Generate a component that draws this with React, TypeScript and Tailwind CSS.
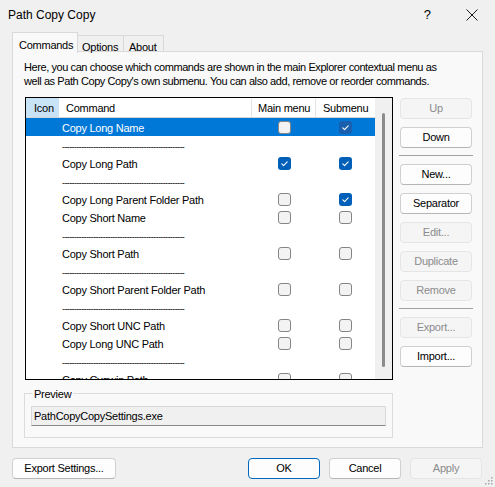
import clsx from 'clsx'

type Row = { label?: string; main?: boolean; sub?: boolean; selected?: boolean; sep?: boolean }

const ROWS: Row[] = [
  { label: 'Copy Long Name', main: false, sub: true, selected: true },
  { sep: true },
  { label: 'Copy Long Path', main: true, sub: true },
  { sep: true },
  { label: 'Copy Long Parent Folder Path', main: false, sub: true },
  { label: 'Copy Short Name' },
  { sep: true },
  { label: 'Copy Short Path' },
  { sep: true },
  { label: 'Copy Short Parent Folder Path' },
  { sep: true },
  { label: 'Copy Short UNC Path' },
  { label: 'Copy Long UNC Path' },
  { sep: true },
  { label: 'Copy Cygwin Path' },
]

function Check({ checked, selected }: { checked?: boolean; selected?: boolean }) {
  if (checked) {
    return (
      <span
        className={clsx(
          'w-[13px] h-[13px] rounded-[3px] flex items-center justify-center',
          selected ? 'bg-[#1a5fae]' : 'bg-[#005fb8]'
        )}
      >
        <svg width="13" height="13" viewBox="0 0 13 13">
          <path d="M3.8 6.9 L5.6 8.6 L9.2 4.9" fill="none" stroke="#fff" strokeWidth="1.1" strokeLinecap="round" strokeLinejoin="round" />
        </svg>
      </span>
    )
  }
  return <span className="w-[13px] h-[13px] rounded-[3px] border border-[#858585] bg-[#f3f3f3]" />
}

function Btn({
  children,
  disabled,
  primary,
  className,
}: {
  children: React.ReactNode
  disabled?: boolean
  primary?: boolean
  className?: string
}) {
  return (
    <button
      className={clsx(
        'h-[21px] flex items-center justify-center rounded-[4px] border leading-none',
        disabled
          ? 'bg-[#f5f5f5] border-[#e5e5e5] text-[#8c8c8c]'
          : primary
            ? 'bg-[#fdfdfd] border-[#0067c0] text-black'
            : 'bg-[#fdfdfd] border-[#d0d0d0] border-b-[#b5b5b5] text-black',
        className
      )}
    >
      {children}
    </button>
  )
}

export default function App() {
  return (
    <div className="relative w-[495px] h-[487px] overflow-hidden bg-[#f0f0f0] text-black text-[11px] tracking-[-0.25px] font-['Liberation_Sans',Arial,sans-serif]">
      {/* title bar */}
      <div className="h-[30px] flex items-center pl-[8px] text-[12px] tracking-normal">
        <span>Path Copy Copy</span>
        <span className="ml-auto mr-[35px] text-[13px]">?</span>
        <svg width="12" height="12" viewBox="0 0 12 12" className="mr-[17px]">
          <path d="M0.5 0.5 L11.5 11.5 M11.5 0.5 L0.5 11.5" stroke="#1a1a1a" strokeWidth="1" />
        </svg>
      </div>

      {/* tabs */}
      <div className="mt-[2px] flex items-end px-[12px] h-[20px] relative z-10">
        <div className="h-[21px] -mb-px w-[66px] border border-b-0 border-[#d9d9d9] bg-[#f9f9f9] pl-[6px] pt-[4px]">
          Commands
        </div>
        <div className="h-[17px] w-[46px] border border-l-0 border-[#d9d9d9] bg-[#f0f0f0] pl-[4px] pt-[3px]">
          Options
        </div>
        <div className="h-[17px] w-[40px] border border-l-0 border-[#d9d9d9] bg-[#f0f0f0] pl-[5px] pt-[3px]">
          About
        </div>
      </div>

      {/* panel */}
      <div className="-mt-px mx-[12px] h-[397px] border border-[#d9d9d9] bg-[#f9f9f9] pl-[11px] pt-[8px]">
        <p className="leading-[14px] tracking-[-0.42px]">
          Here, you can choose which commands are shown in the main Explorer contextual menu as
          <br />
          well as Path Copy Copy&apos;s own submenu. You can also add, remove or reorder commands.
        </p>

        <div className="mt-[9px] flex">
          {/* list */}
          <div className="ml-px w-[368px] h-[283px] border border-black bg-white flex overflow-hidden">
            <div className="flex-1 flex flex-col min-w-0">
              <div className="h-[20px] shrink-0 flex items-center border-b border-[#d5d5d5]">
                <div className="w-[33px] h-full bg-[#c8e2f6] pl-[8px] pt-[2px] flex items-center">Icon</div>
                <div className="w-[193px] h-full pl-[7px] pt-[2px] flex items-center border-r border-[#e5e5e5]">Command</div>
                <div className="w-[64px] h-full pl-[6px] pt-[2px] flex items-center border-r border-[#e5e5e5]">Main menu</div>
                <div className="w-[59px] h-full pl-[7px] pt-[2px] flex items-center">Submenu</div>
              </div>
              {ROWS.map((r, i) => (
                <div
                  key={i}
                  className={clsx(
                    'h-[18px] shrink-0 flex items-center',
                    r.selected && 'bg-[#0078d7] text-white'
                  )}
                >
                  <div className="w-[33px]" />
                  <div className="w-[193px] pl-[3px] pt-[2px] whitespace-nowrap overflow-hidden">
                    {r.sep ? (
                      <span className="text-[9px] tracking-[-0.6px]">{'-'.repeat(51)}</span>
                    ) : (
                      r.label
                    )}
                  </div>
                  {!r.sep && (
                    <>
                      <div className="w-[64px] flex justify-center">
                        <Check checked={r.main} selected={r.selected} />
                      </div>
                      <div className="w-[59px] flex justify-center">
                        <Check checked={r.sub} selected={r.selected} />
                      </div>
                    </>
                  )}
                </div>
              ))}
            </div>
            <div className="w-[17px] shrink-0 bg-[#f0f0f0] flex justify-center">
              <div className="mt-[15px] w-[3px] h-[254px] rounded-full bg-[#8b8b8b]" />
            </div>
          </div>

          {/* buttons */}
          <div className="ml-[7px] w-[72px] pt-px flex flex-col">
            <Btn disabled>Up</Btn>
            <Btn className="mt-[8px]">Down</Btn>
            <div className="mt-[7px] -mx-px h-px bg-[#a0a0a0]" />
            <Btn className="mt-[8px]">New...</Btn>
            <Btn className="mt-[8px]">Separator</Btn>
            <Btn disabled className="mt-[8px]">Edit...</Btn>
            <Btn disabled className="mt-[8px]">Duplicate</Btn>
            <Btn disabled className="mt-[8px]">Remove</Btn>
            <div className="mt-[7px] -mx-px h-px bg-[#a0a0a0]" />
            <Btn disabled className="mt-[8px]">Export...</Btn>
            <Btn className="mt-[8px]">Import...</Btn>
          </div>
        </div>

        {/* preview */}
        <div className="relative mt-[13px] w-[369px] h-[45px] border border-[#dcdcdc] pt-[12px] pl-[6px]">
          <span className="absolute left-[7px] -top-[8px] px-[2px] bg-[#f9f9f9]">Preview</span>
          <div className="w-[355px] h-[20px] border border-[#d9d9d9] border-b-[#8a8a8a] bg-[#f0f0f0] pl-[2px] pt-px flex items-center">
            PathCopyCopySettings.exe
          </div>
        </div>
      </div>

      {/* bottom buttons */}
      <div className="mt-[10px] flex px-[12px] pr-[13px]">
        <Btn className="w-[104px]">Export Settings...</Btn>
        <Btn primary className="ml-auto w-[72px]">OK</Btn>
        <Btn className="ml-[9px] w-[72px]">Cancel</Btn>
        <Btn disabled className="ml-[9px] w-[72px]">Apply</Btn>
      </div>

      <svg width="9" height="9" viewBox="0 0 9 9" className="absolute right-[2px] bottom-[2px]">
        <rect x="7" y="1" width="1.5" height="1.5" fill="#a8a8a8" />
        <rect x="4" y="4" width="1.5" height="1.5" fill="#a8a8a8" />
        <rect x="7" y="4" width="1.5" height="1.5" fill="#a8a8a8" />
        <rect x="1" y="7" width="1.5" height="1.5" fill="#a8a8a8" />
        <rect x="4" y="7" width="1.5" height="1.5" fill="#a8a8a8" />
        <rect x="7" y="7" width="1.5" height="1.5" fill="#a8a8a8" />
      </svg>
    </div>
  )
}
